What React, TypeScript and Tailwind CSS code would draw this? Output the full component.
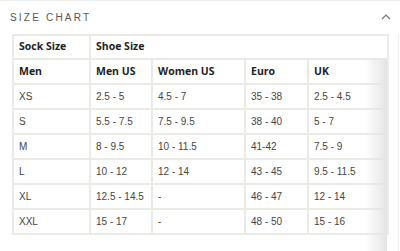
import React from 'react';

const rows: string[][] = [
  ['XS', '2.5 - 5', '4.5 - 7', '35 - 38', '2.5 - 4.5'],
  ['S', '5.5 - 7.5', '7.5 - 9.5', '38 - 40', '5 - 7'],
  ['M', '8 - 9.5', '10 - 11.5', '41-42', '7.5 - 9'],
  ['L', '10 - 12', '12 - 14', '43 - 45', '9.5 - 11.5'],
  ['XL', '12.5 - 14.5', '-', '46 - 47', '12 - 14'],
  ['XXL', '15 - 17', '-', '48 - 50', '15 - 16'],
];

const head = "border-2 border-[#ebebe6] px-[5px] h-[24px] text-left font-bold text-[10.5px] text-[#222] whitespace-nowrap font-['Open_Sans',sans-serif]";
const cell = "border-2 border-[#ebebe6] px-[5px] h-[25px] text-[10px] text-[#444] whitespace-nowrap font-['Liberation_Sans',Arial,sans-serif]";

export default function App() {
  return (
    <div className="w-[400px] h-[251px] bg-white border-t border-[#eeeeee] overflow-hidden">
      <div className="flex items-center justify-between pl-[10px] pr-[9px] h-[33px]">
        <span className="text-[10px] tracking-[0.22em] text-[#555] font-['Liberation_Sans',Arial,sans-serif]">
          SIZE CHART
        </span>
        <svg width="10" height="6" viewBox="0 0 10 6" fill="none" className="mt-[-2px]">
          <polyline points="1,5 5,1 9,5" stroke="#777" strokeWidth="1.2" />
        </svg>
      </div>
      <div className="flex">
        <div className="relative ml-[12px] w-[377px]">
          <table className="w-full border-collapse table-fixed">
            <colgroup>
              <col className="w-[77px]" />
              <col className="w-[62px]" />
              <col className="w-[93px]" />
              <col className="w-[63px]" />
              <col />
            </colgroup>
            <tbody>
              <tr>
                <th className={head}>Sock Size</th>
                <th className={head} colSpan={4}>Shoe Size</th>
              </tr>
              <tr>
                <th className={`${head} h-[25px]`}>Men</th>
                <th className={`${head} h-[25px]`}>Men US</th>
                <th className={`${head} h-[25px]`}>Women US</th>
                <th className={`${head} h-[25px]`}>Euro</th>
                <th className={`${head} h-[25px]`}>UK</th>
              </tr>
              {rows.map((r) => (
                <tr key={r[0]}>
                  {r.map((c, i) => (
                    <td key={i} className={cell}>{c}</td>
                  ))}
                </tr>
              ))}
            </tbody>
          </table>
          <div className="absolute right-[2px] top-[25px] bottom-[2px] w-[22px] bg-linear-to-r from-white/0 to-[#e4e4e4]" />
        </div>
        <div className="ml-auto mr-[1px] w-px h-[220px] bg-[#eeeeee]" />
      </div>
    </div>
  );
}
